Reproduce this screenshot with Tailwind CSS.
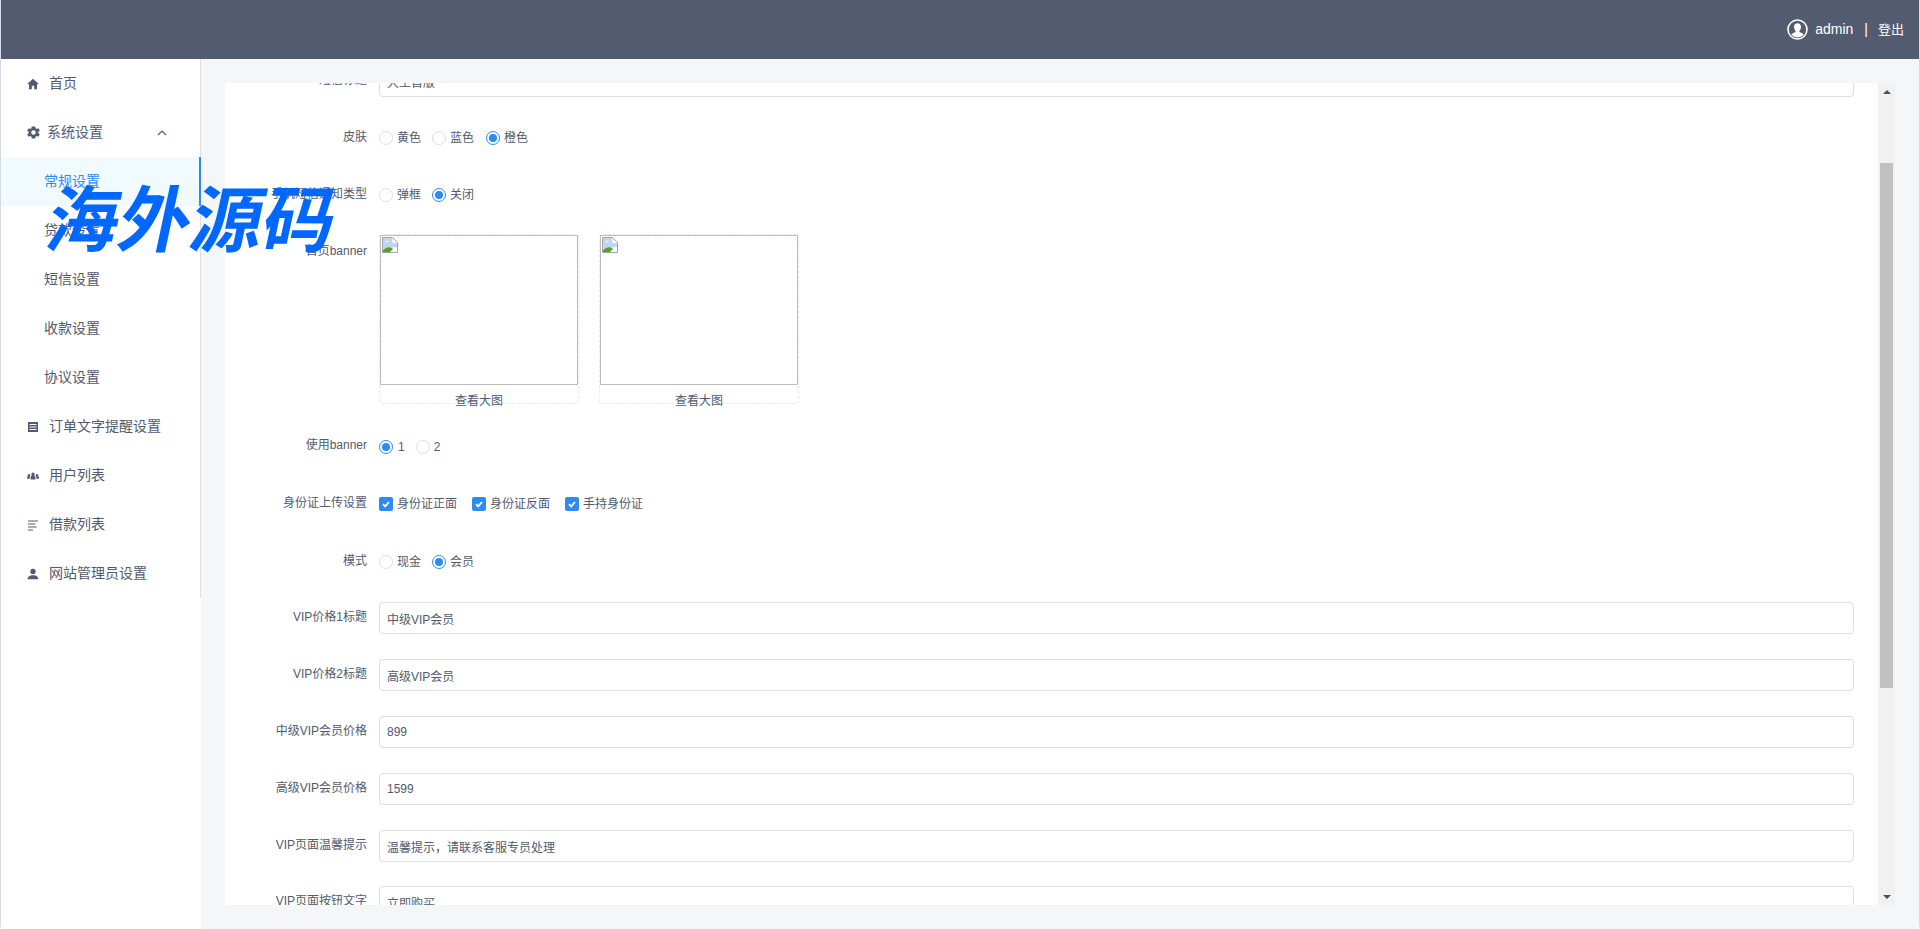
<!DOCTYPE html>
<html lang="en">

<head>
    <meta charset="UTF-8">
    <title>系统设置</title>
    <script src="https://cdn.jsdelivr.net/npm/@tailwindcss/browser@4"></script>
</head>

<body class="h-[929px] overflow-hidden bg-white">
    <div class="relative flex flex-col h-[929px] overflow-hidden border-x border-[#d3dbe7] rounded-b-[4px] text-[12px] text-[#515a6e] font-['Liberation_Sans','Noto_Sans_CJK_SC',sans-serif]">
        <!-- Top bar -->
        <header class="h-[59px] shrink-0 bg-[#535b70] flex items-center justify-end pr-[15px] text-white">
            <svg class="w-[21px] h-[21px] mr-[7px]" viewBox="0 0 21 21">
                <circle cx="10.5" cy="10.5" r="9.5" fill="#535b70" stroke="#fff" stroke-width="1.6"/>
                <path fill="#fff" d="M10.5 4.2c2.2 0 3.5 1.7 3.5 3.9 0 1.5-.7 3-1.6 3.8v1.2c1.2.7 3.5 1.2 4.3 2.7a8.6 8.6 0 0 1-12.4 0c.8-1.5 3.1-2 4.3-2.7v-1.2C7.7 11.100 7 9.600 7 8.100c0-2.200 1.300-3.900 3.500-3.900z"/>
            </svg>
            <span class="text-[14px] mr-[11px]">admin</span>
            <span class="text-[14px] mr-[10px]">|</span>
            <span class="text-[13px]">登出</span>
        </header>

        <div class="flex flex-1 min-h-0">
            <!-- Sidebar -->
            <aside class="w-[200px] shrink-0 bg-white">
                <nav class="h-[539px] border-r border-[#dcdee2] text-[14px]">
                    <a class="h-[49px] flex items-center pl-[26px]">
                        <svg class="w-[12px] h-[12px] mr-[10px]" viewBox="0 0 12 12"><path fill="#515a6e" d="M6 .8.500 5.800l.6.7.9-.8V11.200h2.800V7.700h2.400v3.500H10V5.700l.9.8.6-.7z"/></svg>
                        <span>首页</span>
                    </a>
                    <a class="h-[49px] flex items-center pl-[26px] pr-[33px]">
                        <svg class="w-[13px] h-[13px] mr-[7px]" viewBox="2 2 20 20"><path fill="#515a6e" d="M19.400 13a7.500 7.500 0 0 0 0-2l2.300-1.800-2.200-3.800-2.700 1.100a7.500 7.500 0 0 0-1.700-1L14.700 2.600h-5.400L8.900 5.500a7.500 7.500 0 0 0-1.700 1L4.500 5.400 2.300 9.200 4.600 11a7.500 7.500 0 0 0 0 2l-2.300 1.800 2.200 3.800 2.700-1.100a7.500 7.500 0 0 0 1.700 1l.4 2.900h5.400l.4-2.900a7.500 7.500 0 0 0 1.700-1l2.700 1.100 2.200-3.800zM12 15.500a3.500 3.500 0 1 1 0-7 3.500 3.500 0 0 1 0 7z"/></svg>
                        <span>系统设置</span>
                        <svg class="ml-auto w-[10px] h-[6px]" viewBox="0 0 10 6"><path d="M1 5l4-4 4 4" fill="none" stroke="#515a6e" stroke-width="1.200"/></svg>
                    </a>
                    <a class="h-[49px] flex items-center pl-[43px] bg-[#f0faff] text-[#2d8cf0] border-r-2 border-[#2d8cf0] -mr-px">常规设置</a>
                    <a class="h-[49px] flex items-center pl-[43px]">贷款设置</a>
                    <a class="h-[49px] flex items-center pl-[43px]">短信设置</a>
                    <a class="h-[49px] flex items-center pl-[43px]">收款设置</a>
                    <a class="h-[49px] flex items-center pl-[43px]">协议设置</a>
                    <a class="h-[49px] flex items-center pl-[26px]">
                        <svg class="w-[12px] h-[12px] mr-[10px]" viewBox="0 0 12 12"><path fill="#515a6e" fill-rule="evenodd" d="M1 1h10v10H1zM2.500 3v1h7V3zm0 2.500v1h7v-1zm0 2.500v1h7V8z"/></svg>
                        <span>订单文字提醒设置</span>
                    </a>
                    <a class="h-[49px] flex items-center pl-[26px]">
                        <svg class="w-[12px] h-[8px] mr-[10px]" viewBox="0.6 2.500 10.800 6.500"><path fill="#515a6e" d="M6 2.500a1.600 1.600 0 0 1 1.500 1.700c0 .6-.2 1.100-.5 1.400.7.300 1.200.6 1.200 1.200V9H3.800V6.800c0-.6.500-.9 1.200-1.200-.3-.3-.5-.8-.5-1.400A1.600 1.600 0 0 1 6 2.500zM2.400 4a1.100 1.100 0 0 1 1.100 1.200c0 .4-.1.700-.3.900-.2.200-.2.400-.2.700V8.300H.6V6.700c0-.4.400-.7.900-.8a1.600 1.600 0 0 1-.2-.8A1.100 1.100 0 0 1 2.400 4zm7.200 0a1.100 1.100 0 0 1 1.100 1.100c0 .3-.1.600-.2.800.5.100.9.400.9.800v1.600H9V6.800c0-.3 0-.5-.2-.7-.2-.2-.3-.5-.3-.9A1.100 1.100 0 0 1 9.600 4z"/></svg>
                        <span>用户列表</span>
                    </a>
                    <a class="h-[49px] flex items-center pl-[26px]">
                        <svg class="w-[12px] h-[12px] mr-[10px]" viewBox="0 0 12 12"><path fill="none" stroke="#515a6e" stroke-width="1" d="M1 2h10M1 5h7.500M1 8h8.500M1 11h5"/></svg>
                        <span>借款列表</span>
                    </a>
                    <a class="h-[49px] flex items-center pl-[26px]">
                        <svg class="w-[12px] h-[12px] mr-[10px]" viewBox="0 0 12 12"><path fill="#515a6e" d="M6 .8a2.700 2.700 0 1 1 0 5.400A2.700 2.700 0 0 1 6 .8zM.6 11.200c0-2.400 2.400-3.900 5.400-3.900s5.400 1.500 5.400 3.900z"/></svg>
                        <span>网站管理员设置</span>
                    </a>
                </nav>
            </aside>

            <!-- Main -->
            <main class="flex-1 min-w-0 bg-[#f5f6f8] p-[24px] flex">
                <div class="flex-1 min-w-0 bg-white flex">
                    <form class="flex-1 min-w-0 overflow-hidden pr-[24px]">
                        <div class="flex -mt-[18px]">
                            <label class="w-[142px] mr-[12px] text-right leading-[30px]">短信标题</label>
                            <input class="flex-1 h-[32px] border border-[#dcdee2] rounded-[4px] px-[7px] outline-none" value="大王首版">
                        </div>

                        <div class="flex mt-[25px] h-[32px] items-center">
                            <label class="w-[142px] mr-[12px] text-right -mt-[2px]">皮肤</label>
                            <span class="w-[14px] h-[14px] rounded-full border border-[#dcdee2] mr-[4px]"></span><span class="mr-[11px]">黄色</span>
                            <span class="w-[14px] h-[14px] rounded-full border border-[#dcdee2] mr-[4px]"></span><span class="mr-[12px]">蓝色</span>
                            <span class="w-[14px] h-[14px] rounded-full border border-[#2d8cf0] mr-[4px] flex items-center justify-center"><span class="w-[8px] h-[8px] rounded-full bg-[#2d8cf0]"></span></span><span>橙色</span>
                        </div>

                        <div class="flex mt-[25px] h-[32px] items-center">
                            <label class="w-[142px] mr-[12px] text-right -mt-[2px]">手机短信通知类型</label>
                            <span class="w-[14px] h-[14px] rounded-full border border-[#dcdee2] mr-[4px]"></span><span class="mr-[11px]">弹框</span>
                            <span class="w-[14px] h-[14px] rounded-full border border-[#2d8cf0] mr-[4px] flex items-center justify-center"><span class="w-[8px] h-[8px] rounded-full bg-[#2d8cf0]"></span></span><span>关闭</span>
                        </div>

                        <div class="flex mt-[23px]">
                            <label class="w-[142px] mr-[12px] text-right leading-[34px]">首页banner</label>
                            <div class="w-[200px] h-[170px] mr-[20px] border border-dashed border-[#e8eaec] rounded-[4px] text-center">
                                <div class="w-[198px] h-[150px] border border-[#bcbcbc] p-px">
                                    <svg class="w-[16px] h-[16px]" viewBox="0 0 16 16"><path fill="#fff" stroke="#a3a3a3" d="M.5.500h10l5 5v10H.500z"/><path fill="#c3d5f0" d="M1 1h9.500v5H15v4L1 12z"/><path fill="#5aa02c" d="M1 15v-2c3-3 7-4 10-1l-3 3z"/><path fill="#fff" d="M3 5c1-1.500 3-1.500 4 0z"/></svg>
                                </div>
                                <div class="h-[12px] mt-[6px] leading-[20px]">查看大图</div>
                            </div>
                            <div class="w-[200px] h-[170px] border border-dashed border-[#e8eaec] rounded-[4px] text-center">
                                <div class="w-[198px] h-[150px] border border-[#bcbcbc] p-px">
                                    <svg class="w-[16px] h-[16px]" viewBox="0 0 16 16"><path fill="#fff" stroke="#a3a3a3" d="M.5.500h10l5 5v10H.500z"/><path fill="#c3d5f0" d="M1 1h9.500v5H15v4L1 12z"/><path fill="#5aa02c" d="M1 15v-2c3-3 7-4 10-1l-3 3z"/><path fill="#fff" d="M3 5c1-1.500 3-1.500 4 0z"/></svg>
                                </div>
                                <div class="h-[12px] mt-[6px] leading-[20px]">查看大图</div>
                            </div>
                        </div>

                        <div class="flex mt-[27px] h-[32px] items-center">
                            <label class="w-[142px] mr-[12px] text-right -mt-[4px]">使用banner</label>
                            <span class="w-[14px] h-[14px] rounded-full border border-[#2d8cf0] mr-[5px] flex items-center justify-center"><span class="w-[8px] h-[8px] rounded-full bg-[#2d8cf0]"></span></span><span class="mr-[11px]">1</span>
                            <span class="w-[14px] h-[14px] rounded-full border border-[#dcdee2] mr-[4px]"></span><span>2</span>
                        </div>

                        <div class="flex mt-[25px] h-[32px] items-center">
                            <label class="w-[142px] mr-[12px] text-right -mt-[2px]">身份证上传设置</label>
                            <span class="w-[14px] h-[14px] rounded-[2px] bg-[#2d8cf0] mr-[4px] flex items-center justify-center"><svg class="w-[10px] h-[10px]" viewBox="0 0 10 10"><path d="M2 5.200l2.200 2.200L8 3" fill="none" stroke="#fff" stroke-width="1.700"/></svg></span><span class="mr-[15px]">身份证正面</span>
                            <span class="w-[14px] h-[14px] rounded-[2px] bg-[#2d8cf0] mr-[4px] flex items-center justify-center"><svg class="w-[10px] h-[10px]" viewBox="0 0 10 10"><path d="M2 5.200l2.200 2.200L8 3" fill="none" stroke="#fff" stroke-width="1.700"/></svg></span><span class="mr-[15px]">身份证反面</span>
                            <span class="w-[14px] h-[14px] rounded-[2px] bg-[#2d8cf0] mr-[4px] flex items-center justify-center"><svg class="w-[10px] h-[10px]" viewBox="0 0 10 10"><path d="M2 5.200l2.200 2.200L8 3" fill="none" stroke="#fff" stroke-width="1.700"/></svg></span><span>手持身份证</span>
                        </div>

                        <div class="flex mt-[26px] h-[32px] items-center">
                            <label class="w-[142px] mr-[12px] text-right -mt-[2px]">模式</label>
                            <span class="w-[14px] h-[14px] rounded-full border border-[#dcdee2] mr-[4px]"></span><span class="mr-[11px]">现金</span>
                            <span class="w-[14px] h-[14px] rounded-full border border-[#2d8cf0] mr-[4px] flex items-center justify-center"><span class="w-[8px] h-[8px] rounded-full bg-[#2d8cf0]"></span></span><span>会员</span>
                        </div>

                        <div class="flex mt-[24px]">
                            <label class="w-[142px] mr-[12px] text-right leading-[30px]">VIP价格1标题</label>
                            <input class="flex-1 h-[32px] border border-[#dcdee2] rounded-[4px] px-[7px] outline-none" value="中级VIP会员">
                        </div>
                        <div class="flex mt-[25px]">
                            <label class="w-[142px] mr-[12px] text-right leading-[30px]">VIP价格2标题</label>
                            <input class="flex-1 h-[32px] border border-[#dcdee2] rounded-[4px] px-[7px] outline-none" value="高级VIP会员">
                        </div>
                        <div class="flex mt-[25px]">
                            <label class="w-[142px] mr-[12px] text-right leading-[30px]">中级VIP会员价格</label>
                            <input class="flex-1 h-[32px] border border-[#dcdee2] rounded-[4px] px-[7px] outline-none" value="899">
                        </div>
                        <div class="flex mt-[25px]">
                            <label class="w-[142px] mr-[12px] text-right leading-[30px]">高级VIP会员价格</label>
                            <input class="flex-1 h-[32px] border border-[#dcdee2] rounded-[4px] px-[7px] outline-none" value="1599">
                        </div>
                        <div class="flex mt-[25px]">
                            <label class="w-[142px] mr-[12px] text-right leading-[30px]">VIP页面温馨提示</label>
                            <input class="flex-1 h-[32px] border border-[#dcdee2] rounded-[4px] px-[7px] outline-none" value="温馨提示，请联系客服专员处理">
                        </div>
                        <div class="flex mt-[24px]">
                            <label class="w-[142px] mr-[12px] text-right leading-[30px]">VIP页面按钮文字</label>
                            <input class="flex-1 h-[32px] border border-[#dcdee2] rounded-[4px] px-[7px] outline-none" value="立即购买">
                        </div>
                    </form>

                    <!-- Scrollbar -->
                    <div class="w-[17px] shrink-0 bg-[#f1f1f1] flex flex-col items-center">
                        <div class="h-[17px] w-full flex items-center justify-center">
                            <span class="w-0 h-0 border-x-[4px] border-x-transparent border-b-[4px] border-b-[#505050]"></span>
                        </div>
                        <div class="mt-[63px] h-[525px] w-[13px] bg-[#c1c1c1]"></div>
                        <div class="mt-auto h-[17px] w-full flex items-center justify-center">
                            <span class="w-0 h-0 border-x-[4px] border-x-transparent border-t-[4px] border-t-[#505050]"></span>
                        </div>
                    </div>
                </div>
            </main>
        </div>

        <!-- Watermark -->
        <div class="absolute left-[47px] top-[183px] flex gap-[6px] text-[72px] leading-[76px] font-bold text-[#0068ff] -skew-x-12 whitespace-nowrap pointer-events-none">海外源码</div>
    </div>
</body>

</html>
